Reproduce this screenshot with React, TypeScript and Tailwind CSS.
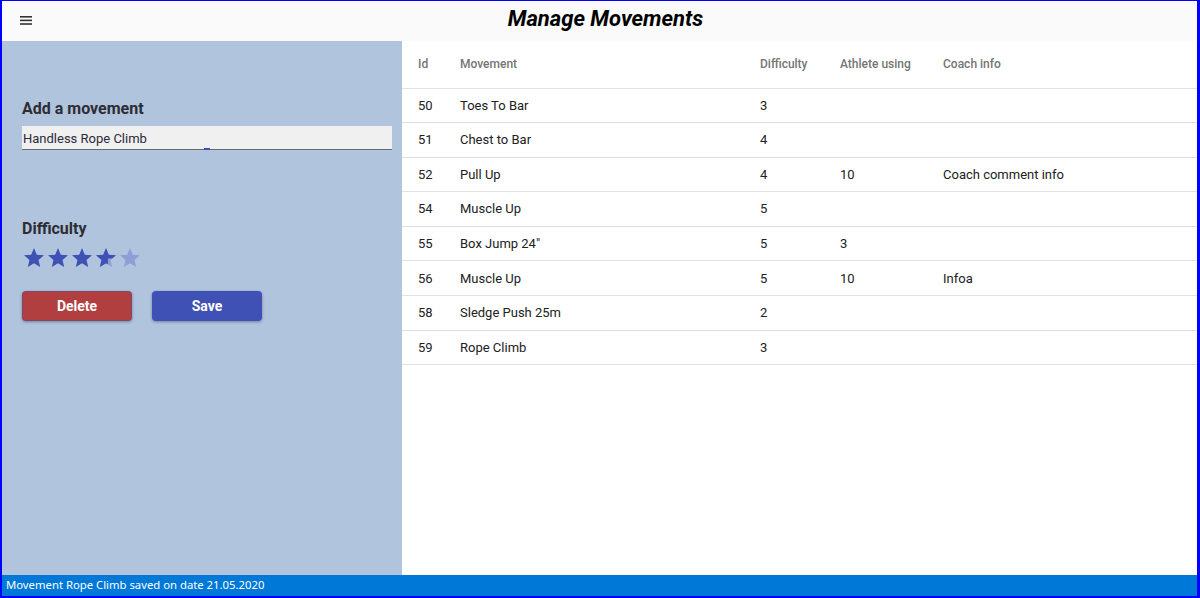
import React from "react";

const rows = [
  { id: 50, name: "Toes To Bar", diff: 3, athletes: "", info: "" },
  { id: 51, name: "Chest to Bar", diff: 4, athletes: "", info: "" },
  { id: 52, name: "Pull Up", diff: 4, athletes: "10", info: "Coach comment info" },
  { id: 54, name: "Muscle Up", diff: 5, athletes: "", info: "" },
  { id: 55, name: "Box Jump 24\"", diff: 5, athletes: "3", info: "" },
  { id: 56, name: "Muscle Up", diff: 5, athletes: "10", info: "Infoa" },
  { id: 58, name: "Sledge Push 25m", diff: 2, athletes: "", info: "" },
  { id: 59, name: "Rope Climb", diff: 3, athletes: "", info: "" },
];

const STAR =
  "M12 17.27L18.18 21l-1.64-7.03L22 9.24l-7.19-.61L12 2 9.19 8.63 2 9.24l5.46 4.73L5.82 21z";

function Star({ mode }: { mode: "full" | "part" | "empty" }) {
  return (
    <span className="relative block h-6 w-6">
      <svg viewBox="0 0 24 24" className="absolute inset-0 h-6 w-6">
        <path d={STAR} fill={mode === "full" ? "#3f51b5" : "#8e9fd6"} />
      </svg>
      {mode === "part" && (
        <svg
          viewBox="0 0 24 24"
          className="absolute inset-0 h-6 w-6 [clip-path:polygon(0_0,100%_0,100%_52%,58%_52%,58%_100%,0_100%)]"
        >
          <path d={STAR} fill="#3f51b5" />
        </svg>
      )}
    </span>
  );
}

export default function App() {
  return (
    <div className="flex h-[598px] w-[1200px] flex-col overflow-hidden border-t border-b-2 border-l-2 border-r-[3px] border-[#0000ff] font-['Roboto',sans-serif]">
      <header className="flex h-10 shrink-0 items-center bg-[#fafafa]">
        <button className="flex h-10 w-12 items-center pl-[18px]">
          <svg width="14" height="10" viewBox="0 0 14 10">
            <rect x="0" y="0" width="12" height="1.6" fill="#333" />
            <rect x="0" y="3.6" width="12" height="1.6" fill="#333" />
            <rect x="0" y="7.2" width="12" height="1.6" fill="#333" />
          </svg>
        </button>
        <h1 className="flex-1 pb-[5px] pr-[36px] text-center text-[22px] font-bold italic text-black">
          Manage Movements
        </h1>
      </header>

      <div className="flex min-h-0 flex-1">
        <aside className="w-[400px] shrink-0 bg-[#b0c4de] pl-5 pr-[10px] pt-[56px]">
          <h2 className="text-base font-bold text-[#2d2d33]">Add a movement</h2>
          <div className="relative mt-[5px] h-6 border-b border-[#6b6b6b] bg-[#f0f0f0]">
            <input
              defaultValue="Handless Rope Climb"
              className="h-full w-full bg-transparent px-px text-[13px] text-[#2b2b3a] outline-none"
            />
            <span className="absolute -bottom-px left-[182px] h-[2px] w-[6px] bg-[#3f51b5]" />
          </div>

          <h2 className="mt-[67px] text-base font-bold text-[#2d2d33]">Difficulty</h2>
          <div className="mt-[5px] flex">
            <Star mode="full" />
            <Star mode="full" />
            <Star mode="full" />
            <Star mode="part" />
            <Star mode="empty" />
          </div>

          <div className="mt-[21px] flex gap-5">
            <button className="h-[30px] w-[110px] rounded-sm border border-[#3f51b5]/40 bg-[#b23f3f] text-sm font-bold text-white shadow-[0_1px_3px_rgba(0,0,0,0.35)]">
              Delete
            </button>
            <button className="h-[30px] w-[110px] rounded-sm bg-[#3f51b5] text-sm font-bold text-white shadow-[0_1px_3px_rgba(0,0,0,0.35)]">
              Save
            </button>
          </div>
        </aside>

        <main className="flex-1 bg-white">
          <table className="w-full table-fixed border-collapse text-left">
            <colgroup>
              <col className="w-[58px]" />
              <col className="w-[300px]" />
              <col className="w-[80px]" />
              <col className="w-[103px]" />
              <col />
            </colgroup>
            <thead>
              <tr className="h-[47px] border-b border-[#e0e0e0] text-xs font-medium text-[#757575]">
                <th className="pb-px pl-4 font-medium">Id</th>
                <th className="pb-px font-medium">Movement</th>
                <th className="pb-px font-medium">Difficulty</th>
                <th className="pb-px font-medium">Athlete using</th>
                <th className="pb-px font-medium">Coach info</th>
              </tr>
            </thead>
            <tbody>
              {rows.map((r) => (
                <tr key={r.id} className="h-[34.6px] border-b border-[#e0e0e0] text-[13px] text-[#212121]">
                  <td className="pl-4">{r.id}</td>
                  <td>{r.name}</td>
                  <td>{r.diff}</td>
                  <td>{r.athletes}</td>
                  <td>{r.info}</td>
                </tr>
              ))}
            </tbody>
          </table>
        </main>
      </div>

      <footer className="flex h-[21px] shrink-0 items-center bg-[#0078d7] px-1 font-['Noto_Sans',sans-serif] text-[11.3px] text-white">
        Movement Rope Climb saved on date 21.05.2020
      </footer>
    </div>
  );
}
